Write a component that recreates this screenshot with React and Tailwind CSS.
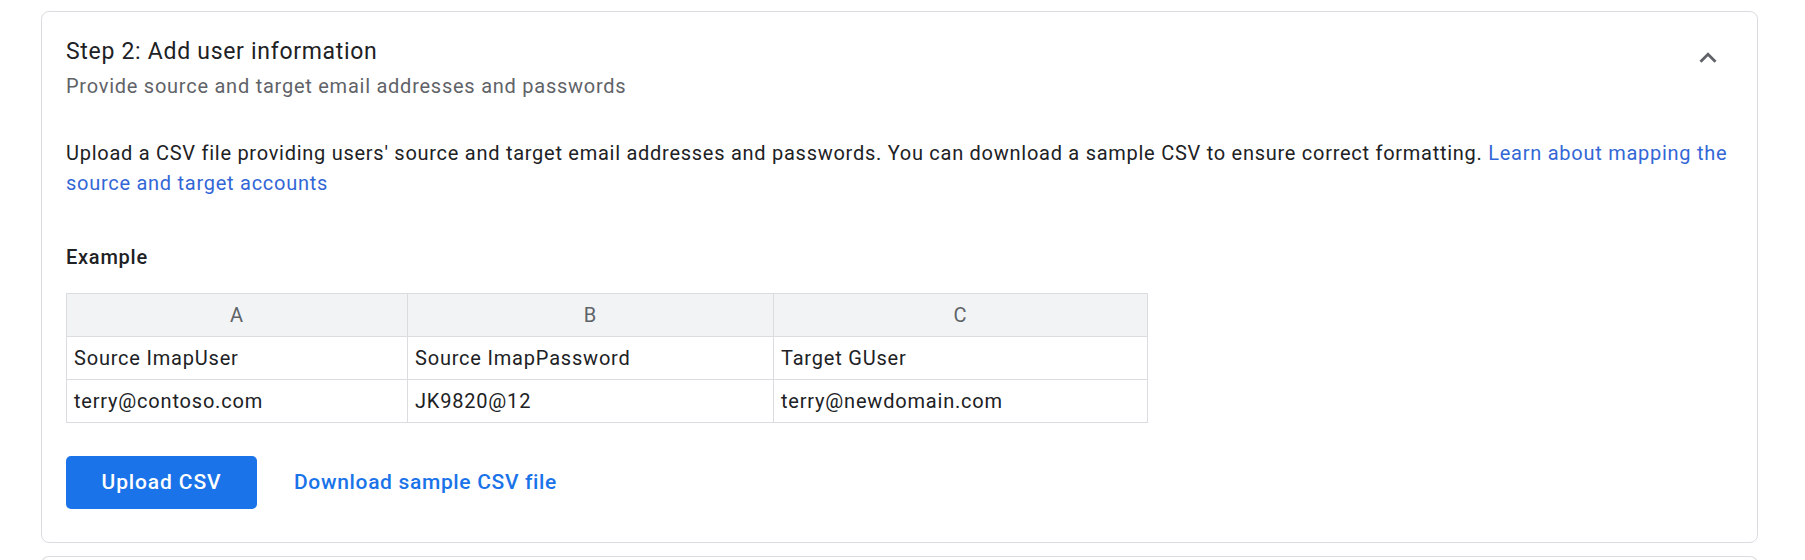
export default function App() {
  const rows = [
    ["Source ImapUser", "Source ImapPassword", "Target GUser"],
    ["terry@contoso.com", "JK9820@12", "terry@newdomain.com"],
  ];
  return (
    <div className="w-[1805px] h-[560px] overflow-hidden bg-white pt-[11px] pl-[41px] [font-family:Roboto,'Noto_Sans',sans-serif]">
      <div className="w-[1717px] rounded-[8px] border border-[#dadce0] px-[24px] pt-[24px] pb-[33px]">
        <div className="flex justify-between">
          <div>
            <div className="text-[23px] leading-[32px] tracking-[0.7px] text-[#202124]">Step 2: Add user information</div>
            <div className="mt-[4px] text-[20px] leading-[28px] tracking-[0.75px] text-[#5f6368]">
              Provide source and target email addresses and passwords
            </div>
          </div>
          <svg className="mt-[5px] mr-[8px] h-[34px] w-[34px] shrink-0" viewBox="0 0 24 24" fill="#5f6368">
            <path d="M12 8l-6 6 1.41 1.41L12 10.83l4.59 4.58L18 14z" />
          </svg>
        </div>
        <p className="mt-[38px] text-[20px] leading-[30px] tracking-[0.73px] text-[#202124]">
          Upload a CSV file providing users' source and target email addresses and passwords. You can download a sample CSV to ensure correct formatting.{" "}
          <a className="text-[#3367d6]">Learn about mapping the source and target accounts</a>
        </p>
        <div className="mt-[45px] text-[20px] leading-[28px] font-medium tracking-[0.75px] text-[#202124]">Example</div>
        <div className="mt-[22px] grid w-[1082px] grid-cols-[341px_366px_374px] border-t border-l border-[#dadce0] text-[20px] tracking-[0.8px]">
          {["A", "B", "C"].map((h) => (
            <div key={h} className="flex h-[43px] items-center justify-center border-r border-b border-[#dadce0] bg-[#f1f3f4] text-[#5f6368]">
              {h}
            </div>
          ))}
          {rows.flat().map((c, i) => (
            <div key={i} className="flex h-[43px] items-center border-r border-b border-[#dadce0] pl-[7px] text-[#202124]">
              {c}
            </div>
          ))}
        </div>
        <div className="mt-[33px] flex items-center">
          <button className="h-[53px] w-[191px] rounded-[5px] bg-[#1a73e8] text-[21px] font-medium tracking-[0.86px] text-white">
            Upload CSV
          </button>
          <a className="ml-[37px] text-[21px] font-medium tracking-[0.66px] text-[#1a73e8]">Download sample CSV file</a>
        </div>
      </div>
      <div className="mt-[13px] h-[40px] w-[1717px] rounded-t-[8px] border-t border-l border-r border-[#dadce0]"></div>
    </div>
  );
}
